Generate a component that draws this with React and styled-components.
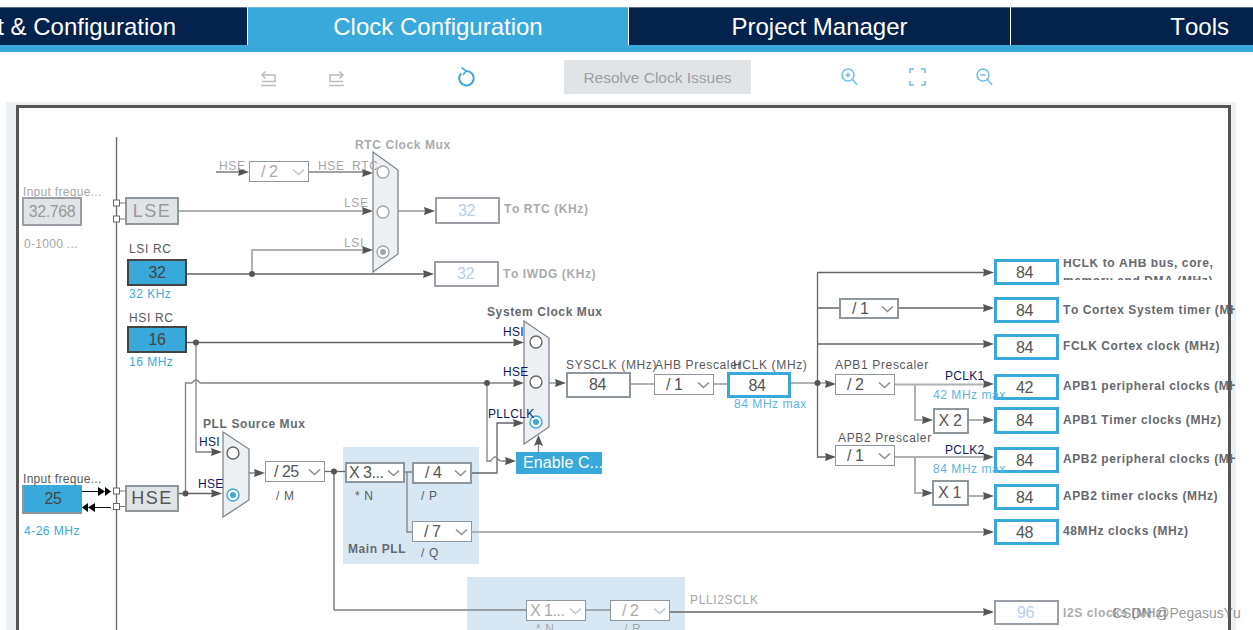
import React from "react";
import styled, { createGlobalStyle, css } from "styled-components";

const OX = 6;
const OY = 102;
const BLUE = "#39a9dc";

const Global = createGlobalStyle`
  html, body { margin: 0; padding: 0; background: #fff; overflow: hidden; }
  body { font-family: "Liberation Sans", Arial, sans-serif; font-kerning: none; }
`;

const Page = styled.div`
  position: relative;
  width: 1253px;
  height: 630px;
  display: flex;
  flex-direction: column;
  overflow: hidden;
  padding-top: 7px;
  box-sizing: border-box;
`;

/* ---------- tabs ---------- */
const TabBar = styled.nav`
  display: flex;
  height: 45px;
  flex: none;
  border-bottom: 7px solid ${BLUE};
  box-sizing: border-box;
`;
const Tab = styled.div`
  flex: none;
  width: ${(p) => p.$w}px;
  display: flex;
  align-items: center;
  justify-content: ${(p) => p.$justify || "center"};
  padding: ${(p) => p.$pad || "0"};
  box-sizing: border-box;
  height: 38px;
  margin-right: 1px;
  color: #fff;
  font-size: 24px;
  white-space: nowrap;
  overflow: hidden;
  background: ${(p) => (p.$active ? BLUE : "#03234c")};
  border-top: 1px solid ${(p) => (p.$active ? "#6fb9dd" : "#5d6d83")};
`;

/* ---------- toolbar ---------- */
const Toolbar = styled.div`
  display: flex;
  align-items: center;
  flex: none;
  height: 50px;
  padding: 0 0 0 260px;
  box-sizing: border-box;
`;
const ToolIcon = styled.svg`
  flex: none;
  width: ${(p) => p.$size || 17}px;
  height: 20px;
  margin-right: ${(p) => p.$gap}px;
  fill: none;
  stroke: ${(p) => p.$color};
  stroke-width: ${(p) => p.$sw || 1.5};
`;
const ResolveButton = styled.div`
  flex: none;
  width: 187px;
  height: 34px;
  margin-right: 90px;
  background: #e1e4e7;
  color: #9a9fa3;
  font-size: 15.5px;
  padding-top: 2px;
  box-sizing: border-box;
  display: flex;
  align-items: center;
  justify-content: center;
`;

/* ---------- canvas ---------- */
const Stage = styled.div`
  position: relative;
  flex: 1;
  width: 1230px;
  margin-left: ${OX}px;
  padding: 3px 5px 0 10px;
  box-sizing: border-box;
  background: #edf0f3;
`;
const Frame = styled.div`
  height: 100%;
  background: #fff;
  border: 3px solid #555;
  border-bottom: none;
  box-sizing: border-box;
`;
const Wires = styled.svg`
  position: absolute;
  left: 0;
  top: 0;
  width: 1230px;
  height: 528px;
  overflow: visible;
`;

const at = css`
  position: absolute;
  left: ${(p) => p.$x - OX}px;
  top: ${(p) => p.$y - OY}px;
`;

const boxVariants = {
  source: css`
    background: ${BLUE};
    border: 2px solid #444;
    color: #444;
  `,
  input: css`
    background: ${BLUE};
    border: 2px solid #8f979e;
    border-top: none;
    border-right: none;
    color: #444;
  `,
  idleInput: css`
    background: #e1e4e7;
    border: 2px solid #9aa0a5;
    color: #999;
  `,
  osc: css`
    background: #e1e4e7;
    border: 2px solid #8f979e;
    color: #555;
    font-size: 18px;
    letter-spacing: 1.5px;
  `,
  idleOsc: css`
    background: #e1e4e7;
    border: 2px solid #8f979e;
    color: #999;
    font-size: 18px;
    letter-spacing: 1.5px;
  `,
  plain: css`
    background: #fff;
    border: 2px solid #8f979e;
    color: #555;
    padding-right: 2px;
  `,
  output: css`
    background: #fff;
    border: 3px solid ${BLUE};
    color: #555;
    padding: 1px 4px 0 0;
  `,
  idle: css`
    background: #fff;
    border: 2px solid #9aa0a5;
    color: #b7cfe8;
    padding-right: 2px;
  `,
  action: css`
    background: ${BLUE};
    color: #fff;
    justify-content: flex-start;
    padding-left: 7px;
    letter-spacing: 0.1px;
  `,
};

const Box = styled.div`
  ${at};
  width: ${(p) => p.$w}px;
  height: ${(p) => p.$h}px;
  box-sizing: border-box;
  display: flex;
  align-items: center;
  justify-content: center;
  font-size: 16px;
  letter-spacing: -0.4px;
  white-space: nowrap;
  ${(p) => boxVariants[p.$variant]};
`;

const Select = styled.div`
  ${at};
  width: 60px;
  height: ${(p) => p.$h || 21}px;
  box-sizing: border-box;
  background: #fff;
  border: ${(p) => (p.$thick ? "2.5px" : "1.5px")} solid #8f979e;
  display: flex;
  align-items: center;
  justify-content: space-between;
  padding: 0 3px 0 ${(p) => p.$pad || 11}px;
  font-size: 16px;
  letter-spacing: -0.5px;
  white-space: nowrap;
  color: ${(p) => (p.$muted ? "#aaa" : "#555")};
`;
const Chevron = styled.svg`
  flex: none;
  width: 13px;
  height: 8px;
  fill: none;
  stroke: ${(p) => (p.$muted ? "#c4c7ca" : "#8a8f94")};
  stroke-width: 1.6;
`;

const labelKinds = {
  plain: css`color: #565a60;`,
  muted: css`color: #a4a7aa;`,
  tight: css`color: #565a60; letter-spacing: 0.3px;`,
  tightMuted: css`color: #a4a7aa; letter-spacing: 0.3px;`,
  navy: css`color: #0c1a66; letter-spacing: 0.3px;`,
  blue: css`color: ${BLUE}; letter-spacing: 0.5px;`,
  pale: css`color: #5cb5e4; letter-spacing: 0.55px;`,
  title: css`color: #66696f; font-weight: 700; letter-spacing: 0.6px;`,
  titleMuted: css`color: #a9acaf; font-weight: 700; letter-spacing: 0.6px;`,
};
const Label = styled.div`
  ${at};
  margin-top: 1px;
  font-size: 12px;
  line-height: 14px;
  letter-spacing: 0.65px;
  white-space: nowrap;
  z-index: 2;
  ${(p) => labelKinds[p.$kind || "plain"]};
  ${(p) => p.$w && css`width: ${p.$w}px; overflow: hidden;`};
`;
const ClippedLabel = styled(Label)`
  height: 21px;
  margin-top: 0;
  overflow: hidden;
  line-height: 18px;
`;
const LabelLine = styled.div`
  &:first-child { margin-top: -5px; }
`;
const Region = styled.div`
  ${at};
  width: ${(p) => p.$w}px;
  height: ${(p) => p.$h}px;
  background: #d8e7f4;
`;
const Watermark = styled.div`
  position: absolute;
  left: 1112px;
  top: 605px;
  font-size: 14px;
  letter-spacing: -0.05px;
  color: rgba(110, 110, 110, 0.72);
  white-space: nowrap;
  z-index: 3;
`;

/* ---------- data ---------- */
const DARK = ["#666", 1.3];
const MID = ["#808488", 1.3];
const GREY = ["#aeb0b2", 2];

const wires = [
  ["M116.5 137V630", ...DARK],
  ["M179 211H364M398 211H427", ...GREY],
  ["M187 274H426", ...DARK],
  ["M252 274V250H364", ...GREY],
  ["M216 172H241", ...DARK],
  ["M309 172H364", ...MID],
  ["M187 342.5H515", ...DARK],
  ["M196 342.5V380", ...GREY],
  ["M185.5 493V383H192Q196 377 200 383H515", ...MID],
  ["M196 380V452H214", ...MID],
  ["M179 493.5H214", ...DARK],
  ["M249 473H257", ...DARK],
  ["M325 471.5H345", ...DARK],
  ["M334 471.5V610", "#9a9c9e", 2],
  ["M334 610H526", ...MID],
  ["M405 472H412M407 472V532H413", ...MID],
  ["M472 473H497V423H515", ...DARK],
  ["M487 383V461H491Q494 455 497 458Q500 462 503 461H509", ...MID],
  ["M538.5 452V442", ...MID],
  ["M549 383H559", ...MID],
  ["M631 384H655M713 384H727M791 383H827", ...GREY],
  ["M817.5 272.5V457H827M817.5 272.5H986M817.5 308H839M898 308H986M817.5 344H986", ...DARK],
  ["M895 384.5H986M915 384.5V420H925M968 420H986", ...GREY],
  ["M895 457H986M915 457V493H925M969 496H986", ...GREY],
  ["M472 532H986", ...GREY],
  ["M670 612H986", ...DARK],
  ["M586 610H611", ...MID],
];

const arrows = [
  [373, 173], [373, 211], [373, 250], [435, 211], [434, 274], [249, 172],
  [524, 342.5], [524, 383], [524, 423], [222, 452], [222, 493.5], [265, 473],
  [516, 461], [566, 383], [836, 384], [836, 457], [933, 420], [933, 493],
  [994, 272.5], [994, 308], [994, 344], [994, 384], [994, 420], [994, 457],
  [994, 496], [994, 532], [994, 612],
];

const dots = [
  [252, 274], [196, 342.5], [185.5, 493.5], [334, 471.5], [487, 383], [817.5, 383],
];

const muxes = [
  "373,152 398,170 398,254 373,272",
  "524,321 549,338 549,427 524,444",
  "223,432 249,449 249,500 223,517",
];

const radios = [
  [383, 172, "#a4a7aa"], [383, 212, "#a4a7aa"], [383, 252, "#a4a7aa", "#a4a7aa"],
  [536, 342, "#666"], [536, 382, "#666"], [536, 422, BLUE, BLUE],
  [233, 453, "#666"], [233, 495, BLUE, BLUE],
];

const pins = [[116.5, 203], [116.5, 219], [116.5, 491], [116.5, 506.5]];

const boxes = [
  ["32.768", 22, 197, 60, 29, "idleInput"],
  ["LSE", 125, 197, 54, 28, "idleOsc"],
  ["32", 127, 259, 60, 27, "source"],
  ["16", 127, 326, 60, 27, "source"],
  ["25", 22, 485, 60, 29, "input"],
  ["HSE", 125, 485, 54, 27, "osc"],
  ["32", 435, 197, 65, 27, "idle"],
  ["32", 434, 261, 65, 26, "idle"],
  ["84", 566, 372, 65, 26, "plain"],
  ["84", 727, 372, 64, 26, "output"],
  ["X 2", 933, 408, 36, 26, "plain"],
  ["X 1", 932, 480, 37, 26, "plain"],
  ["84", 994, 259, 65, 26, "output"],
  ["84", 994, 297, 65, 26, "output"],
  ["84", 994, 334, 65, 26, "output"],
  ["42", 994, 374, 65, 26, "output"],
  ["84", 994, 407, 65, 27, "output"],
  ["84", 994, 447, 65, 26, "output"],
  ["84", 994, 484, 65, 26, "output"],
  ["48", 994, 519, 65, 26, "output"],
  ["96", 994, 600, 65, 25, "idle"],
  ["Enable C...", 516, 452, 86, 22, "action"],
];

const selects = [
  { t: "/ 2", x: 249, y: 161, muted: true },
  { t: "/ 25", x: 265, y: 461, pad: 8 },
  { t: "X 3...", x: 345, y: 462, thick: true, pad: 2 },
  { t: "/ 4", x: 412, y: 462, thick: true, h: 22 },
  { t: "/ 7", x: 412, y: 521 },
  { t: "X 1...", x: 526, y: 600, muted: true, pad: 3 },
  { t: "/ 2", x: 610, y: 600, muted: true },
  { t: "/ 1", x: 654, y: 374 },
  { t: "/ 1", x: 839, y: 298, thick: true },
  { t: "/ 2", x: 835, y: 374 },
  { t: "/ 1", x: 835, y: 445 },
];

const labels = [
  ["Input freque...", 23, 184, "tightMuted"],
  ["0-1000 ...", 24, 236, "tightMuted"],
  ["LSI RC", 129, 241],
  ["32 KHz", 129, 286, "blue"],
  ["HSI RC", 129, 310],
  ["16 MHz", 129, 354, "blue"],
  ["Input freque...", 23, 471, "tight"],
  ["4-26 MHz", 24, 523, "blue"],
  ["HSE", 219, 158, "muted"],
  ["HSE_RTC", 318, 158, "muted"],
  ["LSE", 344, 195, "muted"],
  ["LSI", 344, 235, "muted"],
  ["RTC Clock Mux", 355, 137, "titleMuted"],
  ["To RTC (KHz)", 504, 201, "titleMuted"],
  ["To IWDG (KHz)", 503, 266, "titleMuted"],
  ["System Clock Mux", 487, 304, "title"],
  ["PLL Source Mux", 203, 416, "title"],
  ["Main PLL", 348, 541, "title"],
  ["HSI", 199, 434, "navy"],
  ["HSE", 198, 476, "navy"],
  ["HSI", 503, 324, "navy"],
  ["HSE", 503, 364, "navy"],
  ["PLLCLK", 488, 406, "navy"],
  ["/ M", 276, 488],
  ["* N", 355, 488],
  ["/ P", 421, 488],
  ["/ Q", 421, 545],
  ["* N", 536, 621, "muted"],
  ["/ R", 624, 621, "muted"],
  ["PLLI2SCLK", 690, 592, "muted"],
  ["SYSCLK (MHz)", 566, 357],
  ["AHB Prescaler", 655, 357],
  ["HCLK (MHz)", 733, 357],
  ["84 MHz max", 734, 396, "pale"],
  ["APB1 Prescaler", 835, 357],
  ["APB2 Prescaler", 838, 430],
  ["PCLK1", 945, 368, "navy"],
  ["42 MHz max", 933, 387, "pale"],
  ["PCLK2", 945, 442, "navy"],
  ["84 MHz max", 933, 461, "pale"],
  ["To Cortex System timer (MHz)", 1063, 302, "title", 172],
  ["FCLK Cortex clock (MHz)", 1063, 338, "title"],
  ["APB1 peripheral clocks (MHz)", 1063, 378, "title", 172],
  ["APB1 Timer clocks (MHz)", 1063, 412, "title"],
  ["APB2 peripheral clocks (MHz)", 1063, 451, "title", 172],
  ["APB2 timer clocks (MHz)", 1063, 488, "title"],
  ["48MHz clocks (MHz)", 1063, 523, "title"],
  ["I2S clocks (MHz)", 1063, 605, "titleMuted"],
];

const App = () => (
  <>
    <Global />
    <Page>
      <TabBar>
        <Tab $w={247} $justify="flex-end" $pad="0 71px 0 0">t &amp; Configuration</Tab>
        <Tab $w={380} $active>Clock Configuration</Tab>
        <Tab $w={381}>Project Manager</Tab>
        <Tab $w={242} $justify="flex-end" $pad="0 24px 0 0">Tools</Tab>
      </TabBar>

      <Toolbar>
        <ToolIcon $gap={51} $color="#b9bdc1" viewBox="0 0 17 20">
          <path d="M1 18.5H16M2 8H15V14.5H2" />
          <path d="M5.5 4.5L2 8L5.5 11.5" />
        </ToolIcon>
        <ToolIcon $gap={113} $color="#b9bdc1" viewBox="0 0 17 20">
          <path d="M1 18.5H16M15 8H2V14.5H15" />
          <path d="M11.5 4.5L15 8L11.5 11.5" />
        </ToolIcon>
        <ToolIcon $gap={88} $size={18} $color={BLUE} $sw={2} viewBox="0 0 18 20">
          <path d="M8 4A7.2 7.2 0 1 1 3 6.5" />
          <path d="M3.5 0.5L8 4L5 8" strokeWidth="1.5" />
        </ToolIcon>
        <ResolveButton>Resolve Clock Issues</ResolveButton>
        <ToolIcon $gap={51} $color="#6fc0ea" viewBox="0 0 17 20">
          <circle cx="7" cy="8" r="6" />
          <path d="M11.5 12.5L16 18M4.5 8H9.5M7 5.5V10.5" />
        </ToolIcon>
        <ToolIcon $gap={50} $color="#6fc0ea" viewBox="0 0 17 20">
          <path d="M1 6V2H5M12 2H16V6M16 14V18H12M5 18H1V14" />
        </ToolIcon>
        <ToolIcon $gap={0} $color="#6fc0ea" viewBox="0 0 17 20">
          <circle cx="7" cy="8" r="6" />
          <path d="M11.5 12.5L16 18M4.5 8H9.5" />
        </ToolIcon>
      </Toolbar>

      <Stage>
        <Frame />
        <Region $x={343} $y={447} $w={136} $h={117} />
        <Region $x={467} $y={577} $w={218} $h={53} />

        <Wires viewBox={`${OX} ${OY} 1230 528`}>
          {wires.map(([d, color, w], i) => (
            <path key={i} d={d} fill="none" stroke={color} strokeWidth={w} />
          ))}
          {arrows.map(([x, y], i) => (
            <polygon key={i} points={`${x},${y} ${x - 11},${y - 4} ${x - 10},${y} ${x - 11},${y + 4}`} fill="#555" />
          ))}
          <polygon points="538.5,435 534,446 538.5,444 543,446" fill="#555" />
          <path d="M82 491.5H98M111 507.5H95" stroke="#111" strokeWidth="1.2" />
          <polygon points="98,487 105,491.5 98,496" fill="#000" />
          <polygon points="105,487 111,491.5 105,496" fill="#000" />
          <polygon points="95,503 88,507.5 95,512" fill="#000" />
          <polygon points="88,503 82,507.5 88,512" fill="#000" />
          {dots.map(([x, y], i) => (
            <circle key={i} cx={x} cy={y} r="3" fill="#555" />
          ))}
          {muxes.map((points) => (
            <polygon key={points} points={points} fill="#edf0f3" stroke="#80878e" strokeWidth="1.3" />
          ))}
          {radios.map(([x, y, stroke, inner], i) => (
            <g key={i}>
              <circle cx={x} cy={y} r="6" fill="#fff" stroke={stroke} strokeWidth="1.4" />
              {inner && <circle cx={x} cy={y} r="3" fill={inner} />}
            </g>
          ))}
          {pins.map(([x, y], i) => (
            <g key={i}>
              <path d={`M${x} ${y}H125`} stroke="#777" strokeWidth="1" />
              <rect x={x - 3} y={y - 3} width="6" height="6" fill="#fff" stroke="#666" strokeWidth="1" />
            </g>
          ))}
        </Wires>

        {boxes.map(([t, x, y, w, h, variant], i) => (
          <Box key={i} $x={x} $y={y} $w={w} $h={h} $variant={variant}>{t}</Box>
        ))}

        {selects.map((s, i) => (
          <Select key={i} $x={s.x} $y={s.y} $h={s.h} $thick={s.thick} $muted={s.muted} $pad={s.pad}>
            {s.t}
            <Chevron $muted={s.muted} viewBox="0 0 13 8">
              <path d="M1 1.5L6.5 6.5L12 1.5" />
            </Chevron>
          </Select>
        ))}

        {labels.map(([t, x, y, kind, w], i) => (
          <Label key={i} $x={x} $y={y} $kind={kind} $w={w}>{t}</Label>
        ))}
        <ClippedLabel $x={1063} $y={259} $kind="title" $w={160}>
          <LabelLine>HCLK to AHB bus, core,</LabelLine>
          <LabelLine>memory and DMA (MHz)</LabelLine>
        </ClippedLabel>
      </Stage>

      <Watermark>CSDN @PegasusYu</Watermark>
    </Page>
  </>
);

export default App;
